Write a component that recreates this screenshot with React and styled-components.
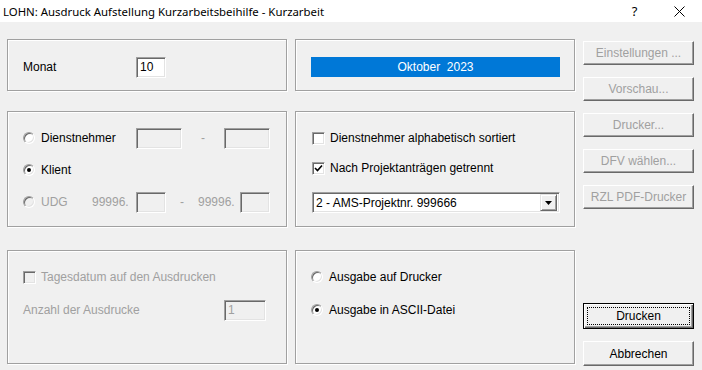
import React from 'react';
import styled, { createGlobalStyle, css } from 'styled-components';

const GlobalStyle = createGlobalStyle`
  html, body {
    margin: 0;
    padding: 0;
    background: #f0f0f0;
  }
  body {
    font-family: "Liberation Sans", Arial, sans-serif;
    font-size: 12px;
    color: #000;
  }
`;

const Window = styled.div`
  width: 702px;
  height: 370px;
  display: flex;
  flex-direction: column;
  background: #f0f0f0;
  overflow: hidden;
`;

const TitleBar = styled.div`
  height: 22px;
  background: #fff;
  display: flex;
  align-items: center;
  padding-left: 3px;
  font-family: "Noto Sans", "Open Sans", sans-serif;
  font-size: 11.4px;
`;

const Title = styled.span`
  flex: 1;
`;

const TitleButton = styled.span`
  width: 45px;
  display: flex;
  justify-content: center;
  align-items: center;
  font-size: 13px;
`;

const Body = styled.div`
  flex: 1;
  display: flex;
  gap: 8px;
  padding: 17px 0 0 7px;
`;

const Panels = styled.div`
  display: grid;
  grid-template-columns: 280px 280px;
  grid-template-rows: 52px 116px 117px;
  column-gap: 8px;
  row-gap: 20px;
  align-content: start;
`;

const Panel = styled.div`
  box-sizing: border-box;
  border: 1px solid #a0a0a0;
  box-shadow: 1px 1px 0 #fff, inset 1px 1px 0 #fff;
  margin-top: ${({ $shift }) => $shift || 0}px;
  padding: ${({ $pad }) => $pad};
  display: flex;
  flex-direction: column;
  gap: ${({ $gap }) => $gap || 0}px;
`;

const Row = styled.div`
  height: 22px;
  display: flex;
  align-items: center;
  margin-top: ${({ $mt }) => $mt || 0}px;
`;

const Label = styled.span`
  width: ${({ $w }) => ($w ? `${$w}px` : 'auto')};
  flex-shrink: 0;
  color: ${({ $disabled }) => ($disabled ? '#a0a0a0' : '#000')};
  text-align: ${({ $center }) => ($center ? 'center' : 'left')};
  white-space: nowrap;
`;

const sunken = css`
  box-sizing: border-box;
  border-style: solid;
  border-width: 1px;
  border-color: #a0a0a0 #fff #fff #a0a0a0;
  box-shadow: inset 1px 1px 0 #696969, inset -1px -1px 0 #e3e3e3;
`;

const TextBox = styled.div`
  ${sunken};
  width: ${({ $w }) => $w}px;
  height: 21px;
  flex-shrink: 0;
  background: ${({ $disabled }) => ($disabled ? '#f0f0f0' : '#fff')};
  color: ${({ $disabled }) => ($disabled ? '#a0a0a0' : '#000')};
  padding: 2px 0 0 3px;
  line-height: 15px;
`;

const MonthBar = styled.div`
  height: 20px;
  background: #0078d7;
  color: #fff;
  display: flex;
  align-items: center;
  justify-content: center;
  white-space: pre;
`;

const RadioCircle = styled.span`
  box-sizing: border-box;
  width: 12px;
  height: 12px;
  flex-shrink: 0;
  border-radius: 50%;
  border: 1px solid;
  border-color: #a0a0a0 #fff #fff #a0a0a0;
  box-shadow: inset 1px 1px 0 #696969, inset -1px -1px 0 #e3e3e3;
  background: ${({ $disabled }) => ($disabled ? '#f0f0f0' : '#fff')};
  margin-right: 6px;
  display: flex;
  align-items: center;
  justify-content: center;
  &::after {
    content: '';
    width: 4px;
    height: 4px;
    border-radius: 50%;
    background: ${({ $checked }) => ($checked ? '#000' : 'transparent')};
  }
`;

const CheckBox = styled.span`
  ${sunken};
  width: 13px;
  height: 13px;
  flex-shrink: 0;
  background: ${({ $disabled }) => ($disabled ? '#f0f0f0' : '#fff')};
  margin-right: 5px;
  display: flex;
  align-items: center;
  justify-content: center;
`;

const Select = styled.div`
  ${sunken};
  height: 21px;
  background: #fff;
  display: flex;
  align-items: center;
  padding: 0 2px 0 3px;
  margin-top: 13px;
`;

const SelectText = styled.span`
  flex: 1;
`;

const DropButton = styled.span`
  box-sizing: border-box;
  width: 17px;
  height: 17px;
  background: #f0f0f0;
  border: 1px solid;
  border-color: #e3e3e3 #696969 #696969 #e3e3e3;
  box-shadow: inset 1px 1px 0 #fff, inset -1px -1px 0 #a0a0a0;
  display: flex;
  align-items: center;
  justify-content: center;
`;

const ButtonColumn = styled.div`
  width: 111px;
  display: flex;
  flex-direction: column;
  gap: 12px;
  padding-top: 2px;
  padding-bottom: 4px;
`;

const Button = styled.div`
  box-sizing: border-box;
  height: ${({ $h }) => $h || 24}px;
  background: #f0f0f0;
  border: 1px solid;
  border-color: #fff #696969 #696969 #fff;
  box-shadow: inset -1px -1px 0 #a0a0a0, inset 1px 1px 0 #f0f0f0;
  color: ${({ $disabled }) => ($disabled ? '#a0a0a0' : '#000')};
  display: flex;
  align-items: center;
  justify-content: center;
  white-space: nowrap;
  margin-top: ${({ $push }) => ($push ? 'auto' : '0')};
  ${({ $default }) =>
    $default &&
    css`
      border: 1px solid #000;
      box-shadow: inset 1px 1px 0 #fff, inset -1px -1px 0 #696969, inset -2px -2px 0 #a0a0a0;
    `}
`;

const FocusRect = styled.span`
  box-sizing: border-box;
  position: absolute;
  inset: 3px;
  border: 1px dotted #000;
`;

const DefaultWrap = styled.span`
  position: relative;
  display: flex;
  align-items: center;
  justify-content: center;
  width: 100%;
  height: 100%;
`;

const Radio = ({ checked, disabled, children, width }) => (
  <>
    <RadioCircle $checked={checked} $disabled={disabled} />
    <Label $w={width} $disabled={disabled}>{children}</Label>
  </>
);

const Check = ({ checked, disabled }) => (
  <CheckBox $disabled={disabled}>
    {checked && (
      <svg width="9" height="9" viewBox="0 0 9 9">
        <path d="M1 4 L3.5 6.5 L8 1.5" stroke="#000" strokeWidth="1.6" fill="none" />
      </svg>
    )}
  </CheckBox>
);

const sideButtons = ['Einstellungen ...', 'Vorschau...', 'Drucker...', 'DFV wählen...', 'RZL PDF-Drucker'];

export default function App() {
  return (
    <Window>
      <GlobalStyle />
      <TitleBar>
        <Title>LOHN: Ausdruck Aufstellung Kurzarbeitsbeihilfe - Kurzarbeit</Title>
        <TitleButton>?</TitleButton>
        <TitleButton>
          <svg width="11" height="11" viewBox="0 0 11 11">
            <path d="M0.5 0.5 L10.5 10.5 M10.5 0.5 L0.5 10.5" stroke="#000" strokeWidth="1" />
          </svg>
        </TitleButton>
      </TitleBar>
      <Body>
        <Panels>
          <Panel $pad="16px 0 0 15px">
            <Row>
              <Label $w={113}>Monat</Label>
              <TextBox $w={30}>10</TextBox>
            </Row>
          </Panel>
          <Panel $pad="17px 14px 0 15px">
            <MonthBar>{'Oktober  2023'}</MonthBar>
          </Panel>

          <Panel $pad="15px 0 0 15px" $gap={10}>
            <Row>
              <Radio width={95}>Dienstnehmer</Radio>
              <TextBox $w={46} $disabled />
              <Label $w={42} $center $disabled>-</Label>
              <TextBox $w={46} $disabled />
            </Row>
            <Row>
              <Radio checked>Klient</Radio>
            </Row>
            <Row>
              <Radio disabled width={51}>UDG</Radio>
              <Label $w={44} $disabled>99996.</Label>
              <TextBox $w={30} $disabled />
              <Label $w={32} $center $disabled>-</Label>
              <Label $w={42} $disabled>99996.</Label>
              <TextBox $w={30} $disabled />
            </Row>
          </Panel>
          <Panel $pad="15px 14px 0 16px">
            <Row>
              <Check />
              <Label>Dienstnehmer alphabetisch sortiert</Label>
            </Row>
            <Row $mt={8}>
              <Check checked />
              <Label>Nach Projektanträgen getrennt</Label>
            </Row>
            <Select>
              <SelectText>2 - AMS-Projektnr. 999666</SelectText>
              <DropButton>
                <svg width="7" height="4" viewBox="0 0 7 4">
                  <path d="M0 0 H7 L3.5 4 Z" fill="#000" />
                </svg>
              </DropButton>
            </Select>
          </Panel>

          <Panel $pad="15px 0 0 15px" $gap={11} $shift={3}>
            <Row>
              <Check disabled />
              <Label $disabled>Tagesdatum auf den Ausdrucken</Label>
            </Row>
            <Row>
              <Label $w={201} $disabled>Anzahl der Ausdrucke</Label>
              <TextBox $w={42} $disabled>1</TextBox>
            </Row>
          </Panel>
          <Panel $pad="15px 0 0 15px" $gap={11} $shift={3}>
            <Row>
              <Radio>Ausgabe auf Drucker</Radio>
            </Row>
            <Row>
              <Radio checked>Ausgabe in ASCII-Datei</Radio>
            </Row>
          </Panel>
        </Panels>
        <ButtonColumn>
          {sideButtons.map((b) => (
            <Button key={b} $disabled>{b}</Button>
          ))}
          <Button $push $default $h={26}>
            <DefaultWrap>
              <FocusRect />
              Drucken
            </DefaultWrap>
          </Button>
          <Button $h={25}>Abbrechen</Button>
        </ButtonColumn>
      </Body>
    </Window>
  );
}
